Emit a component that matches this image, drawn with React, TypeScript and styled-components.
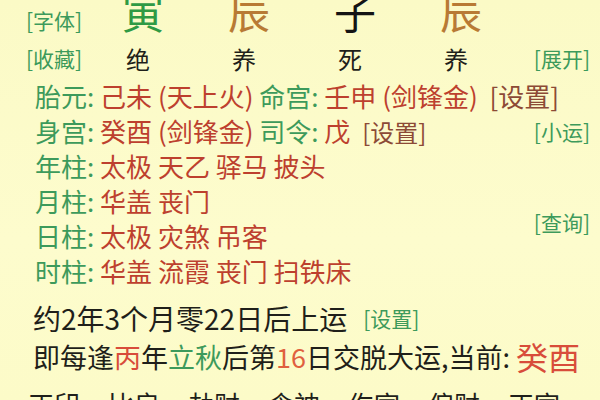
import React from 'react';
import styled, { createGlobalStyle } from 'styled-components';

const GlobalStyle = createGlobalStyle`
  html, body {
    margin: 0;
    padding: 0;
    background: #fcfbc9;
  }
  body {
    font-family: "Noto Sans CJK SC", "Noto Sans", sans-serif;
  }
`;

const tones: Record<string, string> = {
  green: '#3d9a5b',
  red: '#bd402e',
  brown: '#8c4a36',
  dark: '#1f1f1a',
  hot: '#d84c3a',
  orange: '#e0603f',
};

const Page = styled.div`
  width: 600px;
  height: 400px;
  overflow: hidden;
  background: linear-gradient(180deg, #fbfac6 0%, #fdfccd 60%, #fcfbc8 100%);
  color: #1f1f1a;
`;

const Header = styled.div`
  display: grid;
  grid-template-columns: 64px repeat(4, 106px) 1fr;
  grid-template-rows: 40px 36px;
  padding-left: 26px;
  padding-right: 10px;
  align-items: center;
`;

const Tag = styled.span<{ $size?: number }>`
  font-size: ${(p) => p.$size ?? 21}px;
  color: ${tones.green};
  white-space: nowrap;
`;

const RightTag = styled(Tag)`
  justify-self: end;
`;

const Branch = styled.span<{ $color: string }>`
  justify-self: center;
  align-self: start;
  margin-top: -14px;
  font-size: 42px;
  line-height: 50px;
  color: ${(p) => p.$color};
`;

const Stage = styled.span`
  justify-self: center;
  padding-right: 10px;
  font-size: 24px;
  color: ${tones.dark};
`;

const Body = styled.div`
  display: grid;
  grid-template-columns: 1fr auto;
  grid-auto-rows: 35px;
  padding: 2px 10px 0 35px;
  align-items: center;
`;

const Line = styled.div<{ $wide?: boolean }>`
  grid-column: ${(p) => (p.$wide ? '1 / -1' : '1')};
  font-size: 26px;
  white-space: pre;
  line-height: 35px;
`;

const Seg = styled.span<{ $tone: string; $size?: number; $gap?: number }>`
  color: ${(p) => tones[p.$tone]};
  ${(p) => (p.$size ? `font-size: ${p.$size}px;` : '')}
  ${(p) => (p.$gap ? `margin-left: ${p.$gap}px;` : '')}
`;

const SideTag = styled(Tag)<{ $rows: string }>`
  grid-column: 2;
  grid-row: ${(p) => p.$rows};
  justify-self: end;
  font-size: 21px;
  margin-top: ${(p) => (p.$rows.includes('/') ? '8px' : '0')};
`;

const Note = styled.div<{ $h: number; $top?: number; $size: number }>`
  height: ${(p) => p.$h}px;
  margin-top: ${(p) => p.$top ?? 0}px;
  padding-left: 33px;
  display: flex;
  align-items: center;
  font-size: ${(p) => p.$size}px;
  white-space: pre;
  color: ${tones.dark};
`;

const GodRow = styled.div`
  display: grid;
  grid-template-columns: repeat(7, 80px);
  padding-left: 28px;
  padding-top: 9px;
  font-size: 26px;
  color: ${tones.dark};
  white-space: nowrap;
`;

const branches = [
  { ch: '寅', color: '#2f9a44' },
  { ch: '辰', color: '#b87a34' },
  { ch: '子', color: '#141414' },
  { ch: '辰', color: '#b87a34' },
];

const stages = ['绝', '养', '死', '养'];

const pillars: { label: string; stars: string[] }[] = [
  { label: '年柱', stars: ['太极', '天乙', '驿马', '披头'] },
  { label: '月柱', stars: ['华盖', '丧门'] },
  { label: '日柱', stars: ['太极', '灾煞', '吊客'] },
  { label: '时柱', stars: ['华盖', '流霞', '丧门', '扫铁床'] },
];

const gods = ['正印', '比肩', '劫财', '食神', '伤官', '偏财', '正官'];

const App = () => {
  return (
    <>
      <GlobalStyle />
      <Page>
        <Header>
          <Tag>[字体]</Tag>
          {branches.map((b, i) => (
            <Branch key={i} $color={b.color}>
              {b.ch}
            </Branch>
          ))}
          <span />
          <Tag>[收藏]</Tag>
          {stages.map((s, i) => (
            <Stage key={i}>{s}</Stage>
          ))}
          <RightTag>[展开]</RightTag>
        </Header>

        <Body>
          <Line $wide>
            <Seg $tone="green">胎元: </Seg>
            <Seg $tone="red">己未 (天上火) </Seg>
            <Seg $tone="green">命宫: </Seg>
            <Seg $tone="red">壬申 (剑锋金) </Seg>
            <Seg $tone="brown"> [设置]</Seg>
          </Line>
          <Line>
            <Seg $tone="green">身宫: </Seg>
            <Seg $tone="red">癸酉 (剑锋金) </Seg>
            <Seg $tone="green">司令: </Seg>
            <Seg $tone="red">戊 </Seg>
            <Seg $tone="brown" $size={24} $gap={6}>[设置]</Seg>
          </Line>
          <SideTag $rows="2">[小运]</SideTag>
          {pillars.map((p) => (
            <Line key={p.label}>
              <Seg $tone="green">{p.label}: </Seg>
              <Seg $tone="red">{p.stars.join(' ')}</Seg>
            </Line>
          ))}
          <SideTag $rows="4 / span 2">[查询]</SideTag>
        </Body>

        <Note $h={36} $top={12} $size={28}>
          约2年3个月零22日后上运<Seg $tone="green" $size={21} $gap={16}>[设置]</Seg>
        </Note>
        <Note $h={40} $size={27}>
          即每逢<Seg $tone="hot">丙</Seg>年<Seg $tone="green">立秋</Seg>后第
          <Seg $tone="orange">16</Seg>日交脱大运,当前: <Seg $tone="hot" $size={32}>癸酉</Seg>
        </Note>

        <GodRow>
          {gods.map((g, i) => (
            <span key={i}>{g}</span>
          ))}
        </GodRow>
      </Page>
    </>
  );
};

export default App;
